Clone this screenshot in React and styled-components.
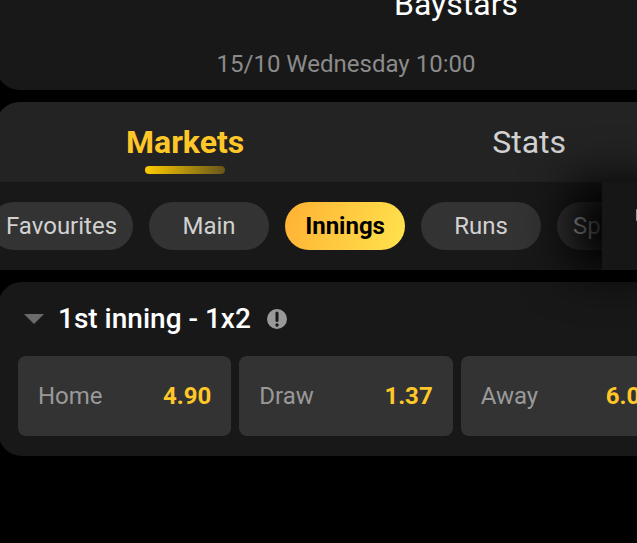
import React from 'react';
import styled, { createGlobalStyle } from 'styled-components';

const categories = ['Favourites', 'Main', 'Innings', 'Runs', 'Specials'];

const odds = [
  { name: 'Home', price: '4.90' },
  { name: 'Draw', price: '1.37' },
  { name: 'Away', price: '6.00' },
];

const App = () => {
  return (
    <>
      <GlobalStyle />
      <Page>
        <EventCard>
          <TeamName>Baystars</TeamName>
          <StartTime>15/10 Wednesday 10:00</StartTime>
        </EventCard>

        <NavCard>
          <Tabs>
            <Tab $active>Markets</Tab>
            <Tab>Stats</Tab>
          </Tabs>
          <Categories>
            <ChipList>
              {categories.map((name) => (
                <Chip key={name} $active={name === 'Innings'}>
                  {name}
                </Chip>
              ))}
            </ChipList>
            <FilterButton aria-label='Filter markets'>
              <FilterIcon />
            </FilterButton>
          </Categories>
        </NavCard>

        <MarketCard>
          <MarketHeader>
            <Toggle aria-label='Collapse market'>
              <svg width='20' height='10' viewBox='0 0 20 10'>
                <path d='M0 0H20L10 10Z' fill='#6b6b6b' />
              </svg>
            </Toggle>
            <MarketTitle>1st inning - 1x2</MarketTitle>
            <InfoButton aria-label='Market info'>
              <svg width='20' height='20' viewBox='0 0 20 20'>
                <circle cx='10' cy='10' r='10' fill='#999' />
                <rect x='8.5' y='2.5' width='3' height='10.5' rx='1.5' fill='#181818' />
                <circle cx='10' cy='16' r='1.7' fill='#181818' />
              </svg>
            </InfoButton>
          </MarketHeader>
          <OddsRow>
            {odds.map((odd) => (
              <OddButton key={odd.name}>
                <span>{odd.name}</span>
                <Price>{odd.price}</Price>
              </OddButton>
            ))}
          </OddsRow>
        </MarketCard>
      </Page>
    </>
  );
};

const FilterIcon = () => (
  <svg width='28' height='36' viewBox='0 0 28 36' fill='#999'>
    <rect x='0' y='1' width='12' height='12' rx='1' />
    <path d='M16 3H28V5H16ZM16 9H28V11H16ZM4 19H28V21H4ZM4 25H28V27H4Z' />
  </svg>
);

const GlobalStyle = createGlobalStyle`
  * {
    box-sizing: border-box;
  }

  body {
    margin: 0;
    overflow: hidden;
    background-color: #000;
    color: #fff;
    font-family: Roboto, sans-serif;
  }

  button {
    margin: 0;
    padding: 0;
    border: none;
    background: none;
    color: inherit;
    font: inherit;
    cursor: pointer;
  }
`;

// the sheet runs a little past both sides of the window
const Page = styled.main`
  display: flex;
  flex-direction: column;
  gap: 12px;
  width: calc(100% + 63px);
  margin: -14px 0 0 -4px;
`;

const EventCard = styled.section`
  display: flex;
  flex-direction: column;
  gap: 28px;
  padding-bottom: 12px;
  border-radius: 0 0 24px 24px;
  background-color: #181818;
`;

const TeamName = styled.div`
  display: flex;
  justify-content: center;
  padding-left: 220px;
  font-size: 32px;
  line-height: 36px;
`;

const StartTime = styled.div`
  color: #8b8b8b;
  font-size: 24px;
  line-height: 28px;
  text-align: center;
`;

const NavCard = styled.nav`
  border-radius: 24px 24px 0 0;
  background-color: #181818;
`;

const Tabs = styled.div`
  display: flex;
  height: 80px;
  padding: 0 6px;
  border-radius: 24px 24px 0 0;
  background-color: #232323;
`;

const Tab = styled.button`
  position: relative;
  flex: 1 1 auto;
  color: ${({ $active }) => ($active ? '#ffc828' : '#d1d1d1')};
  font-size: 32px;
  font-weight: ${({ $active }) => ($active ? 700 : 400)};

  &::after {
    content: '';
    display: ${({ $active }) => ($active ? 'block' : 'none')};
    position: absolute;
    bottom: 8px;
    left: calc(50% - 40px);
    width: 80px;
    height: 8px;
    border-radius: 4px;
    background: linear-gradient(90deg, #ffcc00, #665519);
  }
`;

const Categories = styled.div`
  display: flex;
  height: 88px;
`;

const ChipList = styled.div`
  display: flex;
  flex: 1;
  align-items: center;
  gap: 16px;
  min-width: 0;
  margin-left: -6px;
  overflow: hidden;
`;

const Chip = styled.button`
  flex: none;
  min-width: 120px;
  height: 48px;
  padding: 0 16px;
  border-radius: 24px;
  background: ${({ $active }) =>
    $active ? 'linear-gradient(110deg, #ffb133, #ffe34d)' : '#333'};
  color: ${({ $active }) => ($active ? '#000' : '#d1d1d1')};
  font-size: 24px;
  font-weight: ${({ $active }) => ($active ? 700 : 400)};
`;

const FilterButton = styled.button`
  display: flex;
  position: relative;
  flex: none;
  align-items: center;
  width: 94px;
  padding-left: 34px;
  background-color: #161616;
  box-shadow: -32px 0 48px #000;
`;

const MarketCard = styled.section`
  margin: 0 2px;
  padding: 16px 20px 20px;
  border-radius: 24px;
  background-color: #181818;
`;

const MarketHeader = styled.header`
  display: flex;
  align-items: center;
  padding-left: 6px;
`;

const Toggle = styled.button`
  display: flex;
  margin-right: 14px;
`;

const MarketTitle = styled.h2`
  margin: 0;
  font-size: 28px;
  font-weight: 500;
  line-height: 42px;
`;

const InfoButton = styled.button`
  display: flex;
  margin-left: 16px;
`;

const OddsRow = styled.div`
  display: grid;
  grid-template-columns: repeat(3, 1fr);
  gap: 8px;
  margin-top: 16px;
`;

const OddButton = styled.button`
  display: flex;
  align-items: center;
  justify-content: space-between;
  height: 80px;
  padding: 0 20px;
  border-radius: 8px;
  background-color: #333;
  color: #999;
  font-size: 24px;
`;

const Price = styled.span`
  color: #ffc828;
  font-weight: 700;
`;

export default App;
